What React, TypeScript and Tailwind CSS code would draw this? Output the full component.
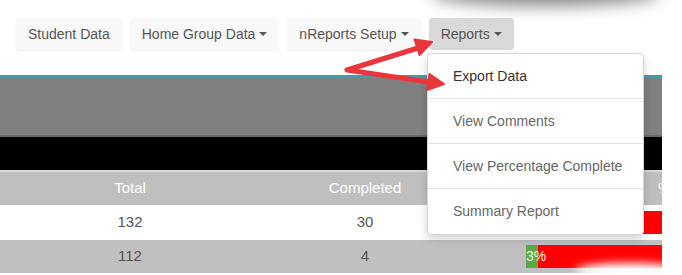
const navItems = [
  { label: "Student Data", caret: false, active: false },
  { label: "Home Group Data", caret: true, active: false },
  { label: "nReports Setup", caret: true, active: false },
  { label: "Reports", caret: true, active: true },
];

const menuItems = ["Export Data", "View Comments", "View Percentage Complete", "Summary Report"];

const rows = [
  { total: 132, completed: 30, bg: "bg-white", h: "h-[35px]" },
  { total: 112, completed: 4, bg: "bg-[#c0c0c0]", h: "h-[33px]" },
];

function Caret() {
  return (
    <span className="ml-1 inline-block h-0 w-0 border-x-4 border-t-4 border-x-transparent border-t-[#555] align-middle" />
  );
}

function ProgressBar({ pct, showLabel }: { pct: number; showLabel: boolean }) {
  return (
    <div className="flex h-[23px] w-[343px] shrink-0 overflow-hidden bg-[#ff0000]">
      <div className="flex h-full items-center bg-[#5da845] text-[14px] text-[#e8ffe0]" style={{ width: `${pct}%` }}>
        {showLabel ? <span className="whitespace-nowrap">{Math.floor(pct)}%</span> : null}
      </div>
    </div>
  );
}

export default function App() {
  return (
    <div className="relative h-[275px] w-[682px] overflow-hidden bg-white font-['Liberation_Sans',Arial,sans-serif]">
      <div className="w-[662px] overflow-hidden">
        <nav className="flex h-[75px] gap-2 pl-4 pt-[18px]">
          {navItems.map((item) => (
            <div
              key={item.label}
              className={`flex h-[32px] items-center rounded-sm px-3 text-[14px] text-[#555] ${
                item.active ? "bg-[#d9d9d9]" : "bg-[#f8f8f8] shadow-[0_1px_2px_rgba(0,0,0,0.07)]"
              }`}
            >
              {item.label}
              {item.caret ? <Caret /> : null}
            </div>
          ))}
        </nav>
        <div className="h-[3px] bg-[#3a9fb5]" />
        <div className="h-[59px] border-b-2 border-[#6a6a6a] bg-[#808080]" />
        <div className="h-[35px] border-b-2 border-[#d8d8d8] bg-black" />

        <div className="flex h-[33px] w-[900px] items-center bg-[#bfbfbf] text-[15px] text-white">
          <div className="w-[260px] shrink-0 text-center">Total</div>
          <div className="w-[210px] shrink-0 text-center">Completed</div>
          <div className="shrink-0 whitespace-nowrap pl-[188px]">% Complete</div>
        </div>

        {rows.map((r, i) => (
          <div key={r.total} className={`flex w-[900px] items-center text-[15px] text-[#555] ${r.bg} ${r.h}`}>
            <div className="w-[260px] shrink-0 text-center">{r.total}</div>
            <div className="w-[210px] shrink-0 text-center">{r.completed}</div>
            <div className="shrink-0 pl-[56px]">
              <ProgressBar pct={(r.completed / r.total) * 100} showLabel={i === 1} />
            </div>
          </div>
        ))}
      </div>

      {/* page curl shadow */}
      <div className="pointer-events-none absolute left-[430px] top-[-20px] h-[26px] w-[230px] rounded-[50%] bg-[#888] blur-[8px]" />
      <div className="pointer-events-none absolute left-[575px] top-[263px] h-[16px] w-[110px] rounded-[50%] bg-white blur-[4px]" />

      {/* dropdown */}
      <div className="absolute left-[427px] top-[53px] w-[217px] rounded border border-[#d6d6d6] bg-white shadow-[0_4px_10px_rgba(0,0,0,0.18)]">
        {menuItems.map((m, i) => (
          <div
            key={m}
            className={`flex h-[45px] items-center pl-[25px] text-[14px] ${i === 0 ? "text-[#333]" : "text-[#666]"} ${
              i < menuItems.length - 1 ? "border-b border-[#e5e5e5]" : ""
            }`}
          >
            {m}
          </div>
        ))}
      </div>

      {/* annotation arrows */}
      <svg className="pointer-events-none absolute left-0 top-0" width="682" height="275">
        <g fill="#e8363a" stroke="#e8363a" strokeLinecap="round" strokeLinejoin="round">
          <polyline points="418,48 347,70 429,82" fill="none" strokeWidth="5" />
          <polygon points="432,42 419.5,55 414.5,39.5" strokeWidth="2" />
          <polygon points="444,84 427,90 429.5,74" strokeWidth="2" />
        </g>
      </svg>
    </div>
  );
}
